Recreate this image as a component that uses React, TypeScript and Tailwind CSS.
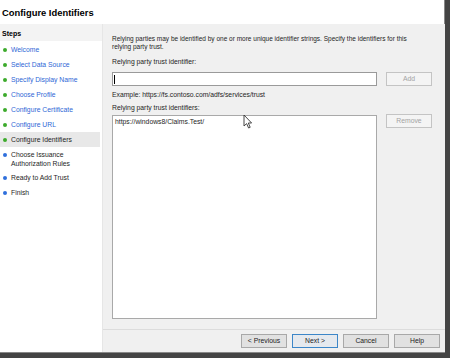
const steps = [
  { label: ["Welcome"], done: true },
  { label: ["Select Data Source"], done: true },
  { label: ["Specify Display Name"], done: true },
  { label: ["Choose Profile"], done: true },
  { label: ["Configure Certificate"], done: true },
  { label: ["Configure URL"], done: true },
  { label: ["Configure Identifiers"], done: true, current: true },
  { label: ["Choose Issuance", "Authorization Rules"], done: false },
  { label: ["Ready to Add Trust"], done: false },
  { label: ["Finish"], done: false },
];

const Cursor = () => (
  <svg width="10" height="15" viewBox="0 0 10 15" className="absolute left-[243px] top-[114px]">
    <path
      d="M1 1 L1 12 L3.6 9.6 L5.6 14 L7.2 13.3 L5.3 9 L8.6 9 Z"
      fill="#fff"
      stroke="#333"
      strokeWidth="0.9"
      strokeLinejoin="round"
    />
  </svg>
);

const WinButton = ({
  children,
  disabled,
  focused,
}: {
  children: React.ReactNode;
  disabled?: boolean;
  focused?: boolean;
}) => (
  <div
    className={
      "w-[46px] h-[14px] flex items-center justify-center text-[6.8px] leading-none border " +
      (disabled
        ? "bg-[#f4f4f4] border-[#c4c4c4] text-[#a3a3a3]"
        : focused
          ? "bg-[#e5e9ee] border-[#3c86c8] text-[#222]"
          : "bg-[#e1e1e1] border-[#a8a8a8] text-[#222]")
    }
  >
    {children}
  </div>
);

export default function App() {
  return (
    <div className="w-[450px] h-[358px] bg-[#444] relative font-['Liberation_Sans',Arial,sans-serif] text-[#1e1e1e] overflow-hidden">
      <div className="w-[445px] h-[353px] bg-white flex flex-col border-r border-b border-[#888]">
        <div className="h-[24px] shrink-0 flex items-center pl-[2px] pt-[2px]">
          <span className="text-[9.4px] font-bold text-black">Configure Identifiers</span>
        </div>
        <div className="flex flex-1 min-h-0">
          <div className="w-[103px] shrink-0 bg-white border-r border-[#e6e6e6] flex flex-col">
            <div className="h-[17px] bg-[#f3f3f3] flex items-center pl-[2px] pt-[4px]">
              <span className="text-[7px] font-bold text-black">Steps</span>
            </div>
            <div className="flex flex-col pt-[1px] pr-[2px]">
              {steps.map((s) => {
                const multi = s.label.length > 1;
                return (
                  <div
                    key={s.label[0]}
                    className={
                      "flex pl-[3px] " +
                      (multi ? "items-start pt-[3px] pb-[2px]" : "h-[15px] items-center") +
                      (s.current ? " bg-[#e8e8e8]" : "")
                    }
                  >
                    <span
                      className={
                        "w-[4px] h-[4px] rounded-full shrink-0 " +
                        (multi ? "mt-[3px] " : "") +
                        (s.done ? "bg-[#3daa2c]" : "bg-[#2f6fdc]")
                      }
                    />
                    <div
                      className={
                        "ml-[4px] text-[6.8px] leading-[9px] " +
                        (s.done && !s.current ? "text-[#2f67d6]" : "text-[#1e1e1e]")
                      }
                    >
                      {s.label.map((l) => (
                        <div key={l}>{l}</div>
                      ))}
                    </div>
                  </div>
                );
              })}
            </div>
          </div>
          <div className="flex-1 bg-[#f0f0f0] flex flex-col text-[6.8px]">
            <div className="flex-1 flex flex-col pl-[9px] pr-[13px] pt-[11px]">
              <p className="leading-[8px] text-[6.5px]">
                Relying parties may be identified by one or more unique identifier strings. Specify the identifiers for this
                <br />
                relying party trust.
              </p>
              <div className="mt-[7px] leading-[8px]">Relying party trust identifier:</div>
              <div className="mt-[6px] flex gap-[9px]">
                <div className="w-[265px] h-[14px] bg-white border border-[#9a9a9a] flex items-center pl-[1px]">
                  <span className="w-[1px] h-[9px] bg-black" />
                </div>
                <WinButton disabled>Add</WinButton>
              </div>
              <div className="mt-[5px] leading-[8px]">Example: https://fs.contoso.com/adfs/services/trust</div>
              <div className="mt-[5px] leading-[8px]">Relying party trust identifiers:</div>
              <div className="mt-[3px] flex gap-[9px] items-start">
                <div className="w-[265px] h-[204px] bg-white border border-[#a9a9a9] px-[2px] pt-[2px] leading-[8px]">
                  https://windows8/Claims.Test/
                </div>
                <div className="-mt-[1px]">
                  <WinButton disabled>Remove</WinButton>
                </div>
              </div>
            </div>
            <div className="h-[23px] shrink-0 border-t border-[#dcdcdc] flex justify-end items-start pt-[4px] pr-[5px] gap-[5px]">
              <WinButton>&lt; Previous</WinButton>
              <WinButton focused>Next &gt;</WinButton>
              <WinButton>Cancel</WinButton>
              <WinButton>Help</WinButton>
            </div>
          </div>
        </div>
      </div>
      <Cursor />
    </div>
  );
}
